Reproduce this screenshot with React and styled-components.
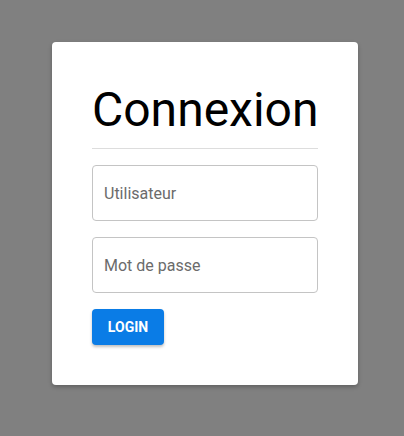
import styled, { createGlobalStyle } from "styled-components";

const GlobalStyle = createGlobalStyle`
  html, body {
    margin: 0;
    padding: 0;
    background-color: #808080;
    font-family: Roboto, "Liberation Sans", sans-serif;
  }
`

const Page = styled.div`
  display: flex;
  align-items: flex-start;
  padding: 42px 0 0 52px;
  min-height: 436px;
  box-sizing: border-box;
`

const Card = styled.div`
  width: 306px;
  box-sizing: border-box;
  background-color: #fff;
  border-radius: 4px;
  padding: 40px;
  box-shadow: 0 2px 4px rgba(0, 0, 0, 0.25);
  display: flex;
  flex-direction: column;
`

const Title = styled.h1`
  margin: 0;
  font-size: 48px;
  font-weight: 400;
  line-height: 56px;
  color: #000;
  text-align: left;
`

const Divider = styled.hr`
  border: none;
  border-top: 1px solid #dddddd;
  margin: 10px 0 16px;
`

const Input = styled.input`
  height: 56px;
  box-sizing: border-box;
  border: 1px solid #c4c4c4;
  border-radius: 4px;
  padding: 0 11px;
  font-family: Roboto, "Liberation Sans", sans-serif;
  font-size: 16px;
  color: #222;
  margin-bottom: 16px;
  outline: none;

  &::placeholder {
    color: #6b6b6b;
  }
`

const Button = styled.button`
  align-self: flex-start;
  width: 72px;
  height: 36px;
  padding: 0;
  border: none;
  border-radius: 4px;
  background-color: #0a7ce6;
  color: #fff;
  font-family: Roboto, "Liberation Sans", sans-serif;
  font-size: 14px;
  font-weight: 700;
  box-shadow: 0 2px 3px rgba(0, 0, 0, 0.25);
  cursor: pointer;
`

function App() {
  return (
    <Page>
      <GlobalStyle />
      <Card>
        <Title>Connexion</Title>
        <Divider />
        <Input placeholder="Utilisateur" />
        <Input type="password" placeholder="Mot de passe" />
        <Button>LOGIN</Button>
      </Card>
    </Page>
  );
}

export default App;
